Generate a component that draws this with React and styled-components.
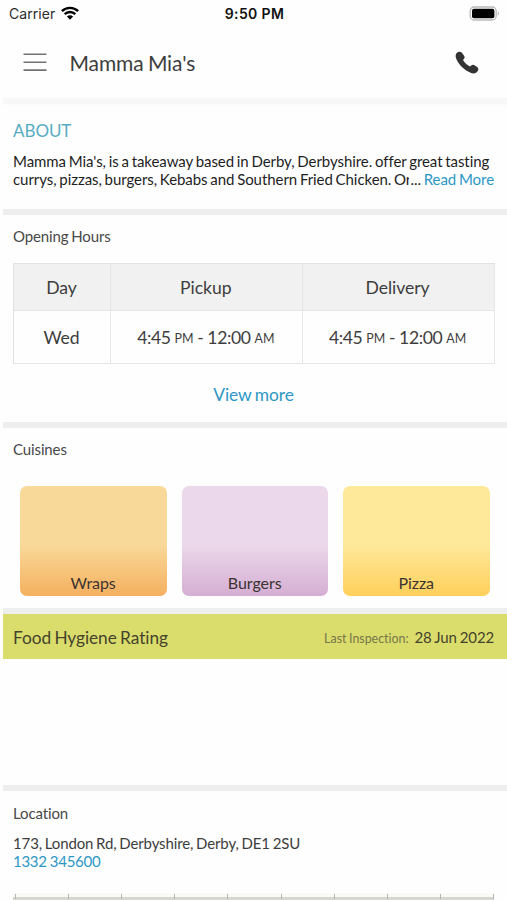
import React from "react";
import styled, { createGlobalStyle } from "styled-components";

const GlobalStyle = createGlobalStyle`
    * {
        box-sizing: border-box;
    }
    body {
        margin: 0;
        background: #fefefe;
        font-family: Lato, sans-serif;
        font-variant-ligatures: none;
        color: #3d3d3d;
        overflow: hidden;
    }
`;

const Screen = styled.main`
    width: 507px;
    height: 900px;
    overflow: hidden;
    display: flex;
    flex-direction: column;
    background: #fefefe;
    word-spacing: -1px;
    letter-spacing: -0.06px;
`;

const StatusBar = styled.div`
    display: grid;
    grid-template-columns: 1fr auto 1fr;
    align-items: center;
    height: 28px;
    padding: 0 7px 0 9px;
    font-family: Inter, sans-serif;
    font-size: 14px;
    color: #2b2b2b;
    word-spacing: 0;
    flex: none;
`;

const Carrier = styled.div`
    display: flex;
    align-items: center;
    gap: 6px;
    letter-spacing: 0.05px;
    margin-top: -1px;

    svg {
        margin-top: -1px;
    }
`;

const Clock = styled.div`
    font-weight: 600;
    letter-spacing: 0.35px;
    margin-top: -1px;
    color: #111;
`;

const BatteryIcon = styled.svg`
    justify-self: end;
    margin-top: -2px;
`;

const Header = styled.header`
    display: flex;
    align-items: center;
    height: 70px;
    padding: 0 28px 0 23px;
    flex: none;

    h1 {
        flex: 1;
        margin: 0 0 1px 22.5px;
        font-size: 21px;
        line-height: 26px;
        font-weight: 400;
        letter-spacing: -0.1px;
    }
`;

const HeaderShadow = styled.div`
    height: 10px;
    margin-left: 3px;
    background: linear-gradient(#f7f7f7 0, #f8f8f8 55%, #fcfcfc 65%, #fefefe);
    flex: none;
`;

const Section = styled.section`
    height: ${props => props.$height}px;
    padding: 0 13px;
    flex: none;
`;

const Divider = styled.div`
    height: 6px;
    margin-left: 3px;
    background: #eeeeee;
    flex: none;
`;

const AboutTitle = styled.h2`
    margin: 0;
    padding-top: 12px;
    font-size: 17px;
    line-height: 22px;
    font-weight: 400;
    color: #56acc3;
`;

const AboutText = styled.div`
    margin-top: 10px;
    font-size: 15px;
    line-height: 18px;
    color: #1e1e1e;
    white-space: nowrap;
`;

const LastLine = styled.div`
    display: flex;
`;

const Clipped = styled.span`
    width: 395.5px;
    margin-right: 2px;
    overflow: hidden;
`;

const Link = styled.a`
    color: #2d97c6;
`;

const ReadMore = styled(Link)`
    margin-left: auto;
`;

const SectionTitle = styled.h3`
    margin: 0;
    padding-top: ${props => props.$top}px;
    font-size: 15px;
    line-height: 18px;
    font-weight: 400;
    letter-spacing: -0.12px;
    color: #484848;
`;

const Hours = styled.div`
    display: grid;
    grid-template-columns: 97px 191.5px 1fr;
    grid-template-rows: 47px 53px;
    margin: 18px -0.5px 0 0;
    border: solid #e2e2e2;
    border-width: 1px 0 0 1px;
`;

const Cell = styled.div`
    display: flex;
    align-items: center;
    justify-content: center;
    border: solid #e6e6e6;
    border-width: 0 1px 1px 0;
    background: ${props => (props.$head ? "#f1f1f1" : "transparent")};
    padding-right: 1px;
    font-size: 17.6px;
    white-space: pre;

    small {
        font-size: 12.4px;
        padding-top: 3px;
    }
`;

const TimeCell = styled(Cell)`
    letter-spacing: -0.38px;
    word-spacing: -0.2px;

    small {
        letter-spacing: -0.1px;
    }
`;

const ViewMore = styled(Link)`
    display: block;
    margin-top: 20px;
    font-size: 17.4px;
    line-height: 22px;
    text-align: center;
`;

const Cuisines = styled.div`
    display: flex;
    gap: 15px;
    padding: 0 4px 0 7.4px;
    margin-top: 28px;
`;

const Cuisine = styled.div`
    display: flex;
    align-items: flex-end;
    justify-content: center;
    flex: 1;
    height: 110px;
    padding: 0 1px 4px 0;
    border-radius: 7px;
    background: linear-gradient(${props => props.$from} 53%, ${props => props.$to});
    font-size: 16px;
    line-height: 19px;
    color: #3b3330;
`;

const Hygiene = styled.div`
    display: flex;
    align-items: center;
    height: 45px;
    margin-left: 3px;
    padding: 1px 13px 0 10px;
    background: #dadd6c;
    color: #45432d;
    font-size: 17.3px;
    flex: none;
`;

const Inspection = styled.div`
    display: flex;
    align-items: baseline;
    margin: -1px 0 0 auto;
    gap: 6px;
    font-size: 15px;
    letter-spacing: -0.15px;
    word-spacing: -0.6px;

    span {
        font-size: 12.4px;
        letter-spacing: 0;
        color: #77764b;
    }
`;

const Address = styled.div`
    margin-top: 12px;
    font-size: 15px;
    line-height: 18px;
    letter-spacing: -0.12px;

    a {
        display: block;
        letter-spacing: -0.28px;
        word-spacing: -0.4px;
    }
`;

const MapEdge = styled.div`
    display: flex;
    justify-content: space-between;
    height: 7px;
    margin: 0 13px;
    padding: 0 0 0 2px;
    background: linear-gradient(#fafaf7 0 4px, #d6d7d0 4px);
    flex: none;
`;

const MapTick = styled.i`
    width: 1px;
    height: 5px;
    margin-top: 1px;
    background: #b5b5b1;
`;

const cuisines = [
    { name: "Wraps", from: "#f9d999", to: "#f4b05f" },
    { name: "Burgers", from: "#ebd8ea", to: "#d5aed3" },
    { name: "Pizza", from: "#fee89a", to: "#ffd05b" }
];

const WifiIcon = () => (
    <svg width="18" height="14" viewBox="0 0 18 14" fill="none" stroke="#000" strokeWidth="2.4">
        <path d="M0.9 5.2a11.5 11.5 0 0 1 16.2 0" />
        <path d="M3.7 8.2a7.5 7.5 0 0 1 10.6 0" />
        <path d="M9 13.7L5.9 10.6a4.4 4.4 0 0 1 6.2 0Z" fill="#000" stroke="none" />
    </svg>
);

const MenuIcon = () => (
    <svg width="24" height="20" viewBox="0 0 24 20" stroke="#737373" strokeWidth="1.6">
        <path d="M0.5 1.3h23M0.5 9.3h23M0.5 17.1h23" />
    </svg>
);

const PhoneIcon = () => (
    <svg width="24" height="24" viewBox="0 0 25 24.5" fill="#333">
        <path d="M2 1.7C3.6.2 5.8-.1 7.2 1.5L9.5 4.7C10.4 6.1 10 7.3 8.9 8.4C8.3 9 8.6 9.6 9.3 10.6C10.8 12.6 12.5 14.1 14.6 15.3C15.4 15.8 16 15.7 16.6 15C17.7 13.9 19 13.6 20.4 14.5L23.4 16.7C24.7 17.8 24.6 19.5 23.5 20.8C21.8 23 19.4 23.6 16.8 22.7C9.9 20.2 3.4 13.6 1.1 7.4C.3 5.2.6 3.1 2 1.7Z" />
    </svg>
);

const Time = () => (
    <TimeCell>
        4:45 <small>PM</small> - 12:00 <small>AM</small>
    </TimeCell>
);

class App extends React.Component {
    renderCuisine(cuisine) {
        return (
            <Cuisine $from={cuisine.from} $to={cuisine.to} key={cuisine.name}>
                {cuisine.name}
            </Cuisine>
        )
    }
    render() {
        return (
            <>
                <GlobalStyle />
                <Screen>
                    <StatusBar>
                        <Carrier>Carrier <WifiIcon /></Carrier>
                        <Clock>9:50 PM</Clock>
                        <BatteryIcon width="31" height="15" viewBox="0 0 31 15">
                            <rect x="1.2" y="1" width="26" height="13" rx="4" fill="#fff" stroke="#b9b9b9" strokeWidth="1.3" />
                            <rect x="3" y="2.8" width="22.4" height="9.4" rx="2" fill="#000" />
                            <path d="M28.8 5.3Q31 7.5 28.8 9.7Z" fill="#aaa" />
                        </BatteryIcon>
                    </StatusBar>
                    <Header>
                        <MenuIcon />
                        <h1>Mamma Mia's</h1>
                        <PhoneIcon />
                    </Header>
                    <HeaderShadow />
                    <Section $height={101}>
                        <AboutTitle>ABOUT</AboutTitle>
                        <AboutText>
                            <div>Mamma Mia's, is a takeaway based in Derby, Derbyshire. offer great tasting</div>
                            <LastLine>
                                <Clipped>currys, pizzas, burgers, Kebabs and Southern Fried Chicken. Or</Clipped>
                                <span>...</span>
                                <ReadMore>Read More</ReadMore>
                            </LastLine>
                        </AboutText>
                    </Section>
                    <Divider />
                    <Section $height={207}>
                        <SectionTitle $top={12}>Opening Hours</SectionTitle>
                        <Hours>
                            <Cell $head>Day</Cell>
                            <Cell $head>Pickup</Cell>
                            <Cell $head>Delivery</Cell>
                            <Cell>Wed</Cell>
                            <Time />
                            <Time />
                        </Hours>
                        <ViewMore>View more</ViewMore>
                    </Section>
                    <Divider />
                    <Section $height={180}>
                        <SectionTitle $top={12}>Cuisines</SectionTitle>
                        <Cuisines>{cuisines.map(this.renderCuisine)}</Cuisines>
                    </Section>
                    <Divider />
                    <Hygiene>
                        Food Hygiene Rating
                        <Inspection>
                            <span>Last Inspection:</span>
                            28 Jun 2022
                        </Inspection>
                    </Hygiene>
                    <Section $height={126} />
                    <Divider />
                    <Section $height={102}>
                        <SectionTitle $top={13}>Location</SectionTitle>
                        <Address>
                            173, London Rd, Derbyshire, Derby, DE1 2SU
                            <Link>1332 345600</Link>
                        </Address>
                    </Section>
                    <MapEdge>
                        {[...Array(10)].map((_, index) => <MapTick key={index} />)}
                    </MapEdge>
                </Screen>
            </>
        );
    }
}

export default App;
